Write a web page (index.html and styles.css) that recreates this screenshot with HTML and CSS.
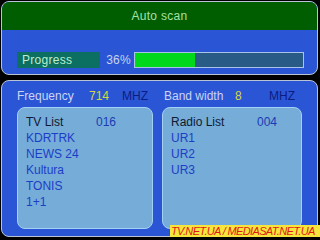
FILE: index.html
```html
<!DOCTYPE html>
<html>
<head>
<meta charset="utf-8">
<link rel="stylesheet" href="styles.css">
</head>
<body>
<div class="screen">
  <div class="panel top">
    <div class="header">Auto scan</div>
    <div class="progress-row">
      <div class="progress-label">Progress</div>
      <div class="percent">36%</div>
      <div class="bar"><div class="fill" style="width:36%"></div></div>
    </div>
  </div>
  <div class="panel bottom">
    <div class="info-row">
      <div class="info left">
        <span class="lbl freq">Frequency</span>
        <span class="val v714">714</span>
        <span class="unit u1">MHZ</span>
      </div>
      <div class="info right">
        <span class="lbl band">Band width</span>
        <span class="val v8">8</span>
        <span class="unit u2">MHZ</span>
      </div>
    </div>
    <div class="lists">
      <div class="list">
        <div class="list-head"><span class="title tv">TV List</span><span class="count">016</span></div>
        <div class="item">KDRTRK</div>
        <div class="item">NEWS 24</div>
        <div class="item">Kultura</div>
        <div class="item">TONIS</div>
        <div class="item">1+1</div>
      </div>
      <div class="list">
        <div class="list-head"><span class="title radio">Radio List</span><span class="count">004</span></div>
        <div class="item">UR1</div>
        <div class="item">UR2</div>
        <div class="item">UR3</div>
      </div>
    </div>
  </div>
  <div class="watermark">TV.NET.UA / MEDIASAT.NET.UA</div>
</div>
</body>
</html>
```
FILE: styles.css
```css
html, body {
  margin: 0;
  padding: 0;
  background: #000;
}
.screen {
  position: relative;
  width: 320px;
  height: 240px;
  background: #000;
  font-family: "Liberation Sans", Arial, sans-serif;
  font-size: 12px;
  overflow: hidden;
  padding-top: 1px;
  box-sizing: border-box;
}
.panel {
  margin: 0 2px 0 1px;
  border: 1px solid #b8c4d4;
  border-radius: 8px;
  background: #2a56d6;
  overflow: hidden;
}
.top {
  height: 74px;
  box-sizing: border-box;
}
.header {
  height: 28px;
  background: #005e00;
  color: #a8e0a8;
  text-align: center;
  line-height: 28px;
  font-size: 12px;
  letter-spacing: 0.3px;
}
.progress-row {
  display: flex;
  align-items: center;
  margin-top: 22px;
  height: 16px;
  padding-left: 15px;
}
.progress-label {
  width: 78px;
  height: 16px;
  line-height: 16px;
  background: #0b6f62;
  color: #bfeecc;
  padding-left: 5px;
  letter-spacing: 0.3px;
}
.percent {
  width: 34px;
  color: #c8d4ea;
  text-align: center;
  letter-spacing: 0.2px;
  padding-left: 3px;
  box-sizing: border-box;
}
.bar {
  width: 168px;
  height: 14px;
  border: 1px solid #a8c4e4;
  background: #285c86;
}
.fill {
  height: 100%;
  background: #00d81c;
}
.bottom {
  margin-top: 5px;
  height: 157px;
  box-sizing: border-box;
  padding: 0 0 0 15px;
}
.info-row {
  display: flex;
  height: 25px;
  align-items: center;
  padding-top: 5px;
  box-sizing: border-box;
}
.info {
  display: flex;
  align-items: center;
}
.left { width: 147px; }
.lbl { color: #ccd4f4; }
.val { color: #d6d640; }
.unit { color: #0c1c80; }
.freq { width: 72px; }
.v714 { width: 33px; }
.band { width: 71px; }
.v8 { width: 34px; }
.lists {
  display: flex;
  gap: 9px;
  margin-top: 1px;
}
.list {
  width: 136px;
  height: 122px;
  box-sizing: border-box;
  background: #76acd8;
  border: 1px solid #a4d0f4;
  border-radius: 8px;
  padding: 6px 0 0 8px;
}
.list + .list { width: 140px; }
.list-head {
  display: flex;
  height: 16px;
  line-height: 16px;
}
.title { color: #101a30; }
.tv { width: 70px; }
.radio { width: 86px; }
.count { color: #1a3cb4; }
.item {
  height: 16px;
  line-height: 16px;
  color: #1c3ec6;
}
.watermark {
  position: absolute;
  left: 170px;
  top: 225px;
  width: 150px;
  height: 12px;
  line-height: 12px;
  background: #f6e63c;
  color: #e01818;
  font-style: italic;
  font-size: 11px;
  letter-spacing: -0.65px;
  white-space: nowrap;
  padding-left: 1px;
  box-sizing: border-box;
}
```
